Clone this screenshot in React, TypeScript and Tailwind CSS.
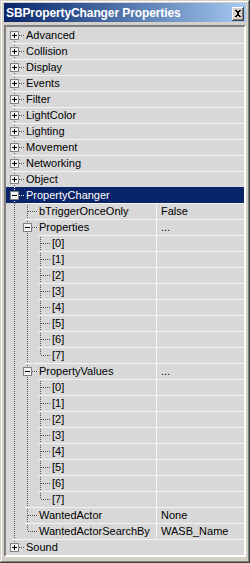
import React from 'react';

interface PropNode {
  label: string;
  value?: string;
  children?: PropNode[];
  expanded?: boolean;
  selected?: boolean;
}

interface FlatRow {
  node: PropNode;
  depth: number;
  last: boolean;
  first: boolean;
  lineage: boolean[];
}

// tree connector centres per depth (row coords, row starts at page x=6)
const CENTER = [8, 21, 34];
const LINE_LEFT = ['left-[6px]', 'left-[19px]', 'left-[32px]'];

const slots = (): PropNode[] => Array.from({ length: 8 }, (_, i) => ({ label: `[${i}]`, value: '' }));

const tree: PropNode[] = [
  { label: 'Advanced', children: [] },
  { label: 'Collision', children: [] },
  { label: 'Display', children: [] },
  { label: 'Events', children: [] },
  { label: 'Filter', children: [] },
  { label: 'LightColor', children: [] },
  { label: 'Lighting', children: [] },
  { label: 'Movement', children: [] },
  { label: 'Networking', children: [] },
  { label: 'Object', children: [] },
  {
    label: 'PropertyChanger',
    expanded: true,
    selected: true,
    children: [
      { label: 'bTriggerOnceOnly', value: 'False' },
      { label: 'Properties', value: '...', expanded: true, children: slots() },
      { label: 'PropertyValues', value: '...', expanded: true, children: slots() },
      { label: 'WantedActor', value: 'None' },
      { label: 'WantedActorSearchBy', value: 'WASB_Name' },
    ],
  },
  { label: 'Sound', children: [] },
];

function flatten(nodes: PropNode[], depth: number, lineage: boolean[], out: FlatRow[]) {
  nodes.forEach((n, i) => {
    const last = i === nodes.length - 1;
    out.push({ node: n, depth, last, first: depth === 0 && i === 0, lineage });
    if (n.children && n.expanded) flatten(n.children, depth + 1, [...lineage, last], out);
  });
  return out;
}

const TreeLines: React.FC<{ row: FlatRow }> = ({ row }) => {
  const c = CENTER[row.depth];
  const stroke = row.node.selected ? '#ffffff' : '#505050';
  const hasBox = !!row.node.children;
  const dot = { stroke, strokeDasharray: '1 1', shapeRendering: 'crispEdges' as const };
  return (
    <svg width={c + 12} height={16} className="shrink-0">
      {row.lineage.map((ancLast, a) =>
        ancLast ? null : <line key={a} x1={CENTER[a] + 0.5} y1={0} x2={CENTER[a] + 0.5} y2={16} {...dot} />
      )}
      {!row.first && <line x1={c + 0.5} y1={0} x2={c + 0.5} y2={8} {...dot} />}
      {!row.last && <line x1={c + 0.5} y1={8} x2={c + 0.5} y2={16} {...dot} />}
      <line x1={c + 1} y1={8.5} x2={c + 11} y2={8.5} {...dot} />
      {hasBox && (
        <g shapeRendering="crispEdges">
          <rect x={c - 3.5} y={4.5} width={8} height={8} fill="#f4f4f4" stroke="#808080" />
          <line x1={c - 2} y1={8.5} x2={c + 3} y2={8.5} stroke="#000000" />
          {!row.node.expanded && <line x1={c + 0.5} y1={6} x2={c + 0.5} y2={11} stroke="#000000" />}
        </g>
      )}
    </svg>
  );
};

const Row: React.FC<{ row: FlatRow; index: number }> = ({ row, index }) => {
  const { node } = row;
  const isProp = node.value !== undefined;
  return (
    <div className={`relative flex h-[16px] items-center ${node.selected ? 'bg-[#0a246a] text-white' : 'text-black'}`}>
      {index > 0 && !node.selected && (
        <div className={`absolute top-0 right-0 h-px bg-[#f4f4f4] ${LINE_LEFT[row.depth]}`} />
      )}
      <div className="flex w-[150px] shrink-0 items-center">
        <TreeLines row={row} />
        <span className="whitespace-nowrap leading-[16px]">{node.label}</span>
      </div>
      {isProp && (
        <div className="flex h-full flex-1 items-center border-l border-[#f4f4f4] pl-[4px] leading-[16px]">
          {node.value}
        </div>
      )}
    </div>
  );
};

export default function App() {
  const rows = flatten(tree, 0, [], []);
  return (
    <div className="h-[563px] w-[250px] bg-[#d4d0c8] font-['Liberation_Sans',Arial,sans-serif] text-[11px] shadow-[inset_-1px_-1px_#404040,inset_1px_1px_#d4d0c8,inset_-2px_-2px_#808080,inset_2px_2px_#ffffff] pt-[3px] px-[4px]">
      {/* Title bar */}
      <div className="flex h-[19px] items-center justify-between bg-gradient-to-r from-[#0a246a] to-[#a6caf0] pl-[2px] pr-[2px]">
        <span className="text-[12px] font-bold tracking-[-0.1px] text-white">SBPropertyChanger Properties</span>
        <div className="mt-[2px] flex h-[14px] w-[12px] items-center justify-center bg-[#d4d0c8] shadow-[inset_-1px_-1px_#404040,inset_1px_1px_#ffffff,inset_-2px_-2px_#808080]">
          <svg width="8" height="7" viewBox="0 0 8 7" shapeRendering="crispEdges">
            <path d="M1 0h2v1h-2zM5 0h2v1h-2zM2 1h2v1h-2zM4 1h2v1h-2zM3 2h2v3h-2zM2 5h2v1h-2zM4 5h2v1h-2zM1 6h2v1h-2zM5 6h2v1h-2z" fill="#000" />
          </svg>
        </div>
      </div>
      {/* Property list */}
      <div className="mt-[3px] h-[532px] border-2 border-t-[#808080] border-l-[#808080] border-b-white border-r-white bg-[#d8d8d8]">
        {rows.map((r, i) => (
          <Row key={i} row={r} index={i} />
        ))}
      </div>
    </div>
  );
}
